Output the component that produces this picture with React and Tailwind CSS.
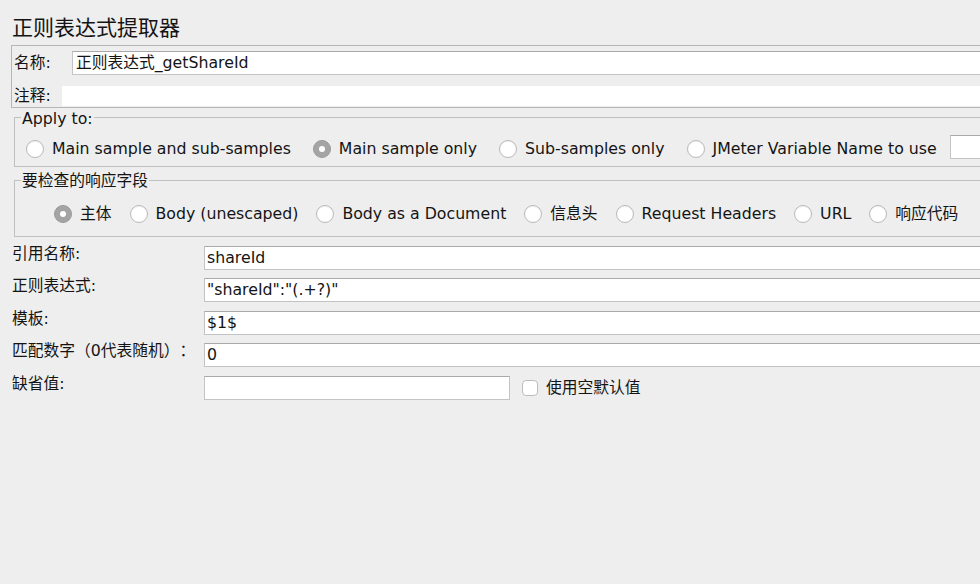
import React from "react";

const FONT = { fontFamily: '"DejaVu Sans", "Noto Sans CJK SC", sans-serif' };

function Radio({ checked, label }) {
  return (
    <div className="flex items-center shrink-0">
      {checked ? (
        <div className="w-[18px] h-[18px] rounded-full bg-[#a4a4a4] border border-[#9a9a9a] flex items-center justify-center">
          <div className="w-[6px] h-[6px] rounded-full bg-white" />
        </div>
      ) : (
        <div className="w-[18px] h-[18px] rounded-full bg-white border border-[#b9b9b9] shadow-[inset_0_1px_1px_rgba(0,0,0,0.06)]" />
      )}
      <span className="ml-[8px] whitespace-nowrap leading-[20px]">{label}</span>
    </div>
  );
}

function FieldRow({ label, value, mt, children }) {
  return (
    <div className={`flex items-start ${mt}`}>
      <div className="w-[204px] shrink-0 pl-[12px] -mt-[1px] leading-[18px] whitespace-nowrap">{label}</div>
      {children ? (
        children
      ) : (
        <div className="flex-1 h-[24px] bg-white border border-[#c2c2c2] border-t-[#aaaaaa] pl-[2px] flex items-center whitespace-nowrap">
          {value}
        </div>
      )}
    </div>
  );
}

export default function App() {
  return (
    <div
      className="w-[980px] h-[584px] overflow-hidden bg-[#eeeeee] text-[#141414] text-[15.75px] [text-spacing-trim:space-all]"
      style={FONT}
    >
      <div className="w-[1120px]">
        <div
          className="h-[45px] pl-[12px] pt-[13px] text-[21px] leading-[27px]"
          style={{ fontFamily: '"Noto Sans CJK SC", sans-serif' }}
        >
          正则表达式提取器
        </div>

        <div className="ml-[11px] h-[63px] border border-[#b6b6b6] pt-[5px]">
          <div className="flex items-center h-[24px]">
            <div className="w-[60px] shrink-0 pl-[2px] leading-[20px]">名称:</div>
            <div className="flex-1 h-[24px] bg-white border border-[#c4c4c4] border-t-[#a9a9a9] pl-[3px] flex items-center whitespace-nowrap">
              正则表达式_getShareId
            </div>
          </div>
          <div className="flex items-center h-[20px] mt-[11px]">
            <div className="w-[50px] shrink-0 pl-[2px] leading-[20px]">注释:</div>
            <div className="flex-1 h-[20px] bg-white" />
          </div>
        </div>

        <div className="relative ml-[14px] mt-[9px] h-[50px] border border-[#c0c0c0] pt-[21px] pl-[11px]">
          <div className="absolute left-[6px] -top-[8px] px-[1px] bg-[#eeeeee] leading-[18px]">Apply to:</div>
          <div className="flex items-center gap-[22px]">
            <Radio label="Main sample and sub-samples" />
            <Radio checked label="Main sample only" />
            <Radio label="Sub-samples only" />
            <Radio label="JMeter Variable Name to use" />
            <div className="w-[120px] h-[24px] bg-white border border-[#c4c4c4] border-t-[#a9a9a9] -ml-[9px] -mt-[4px]" />
          </div>
        </div>

        <div className="relative ml-[14px] mt-[13px] h-[57px] border border-[#c0c0c0] pt-[23px] pl-[39px]">
          <div className="absolute left-[6px] -top-[9px] px-[1px] bg-[#eeeeee] leading-[18px]">要检查的响应字段</div>
          <div className="flex items-center gap-[18px]">
            <Radio checked label="主体" />
            <Radio label="Body (unescaped)" />
            <Radio label="Body as a Document" />
            <Radio label="信息头" />
            <Radio label="Request Headers" />
            <Radio label="URL" />
            <Radio label="响应代码" />
          </div>
        </div>

        <div className="mt-[9px]">
          <FieldRow mt="mt-0" label="引用名称:" value="shareId" />
          <FieldRow mt="mt-[8px]" label="正则表达式:" value={'"shareId":"(.+?)"'} />
          <FieldRow mt="mt-[9px]" label="模板:" value="$1$" />
          <FieldRow mt="mt-[8px]" label="匹配数字（0代表随机）：" value="0" />
          <FieldRow mt="mt-[9px]" label="缺省值:">
            <div className="flex items-center">
              <div className="w-[306px] h-[24px] bg-white border border-[#c4c4c4] border-t-[#a9a9a9]" />
              <div className="ml-[12px] w-[16px] h-[16px] rounded-[4px] bg-white border border-[#bdbdbd]" />
              <span className="ml-[8px] leading-[20px] whitespace-nowrap">使用空默认值</span>
            </div>
          </FieldRow>
        </div>
      </div>
    </div>
  );
}
